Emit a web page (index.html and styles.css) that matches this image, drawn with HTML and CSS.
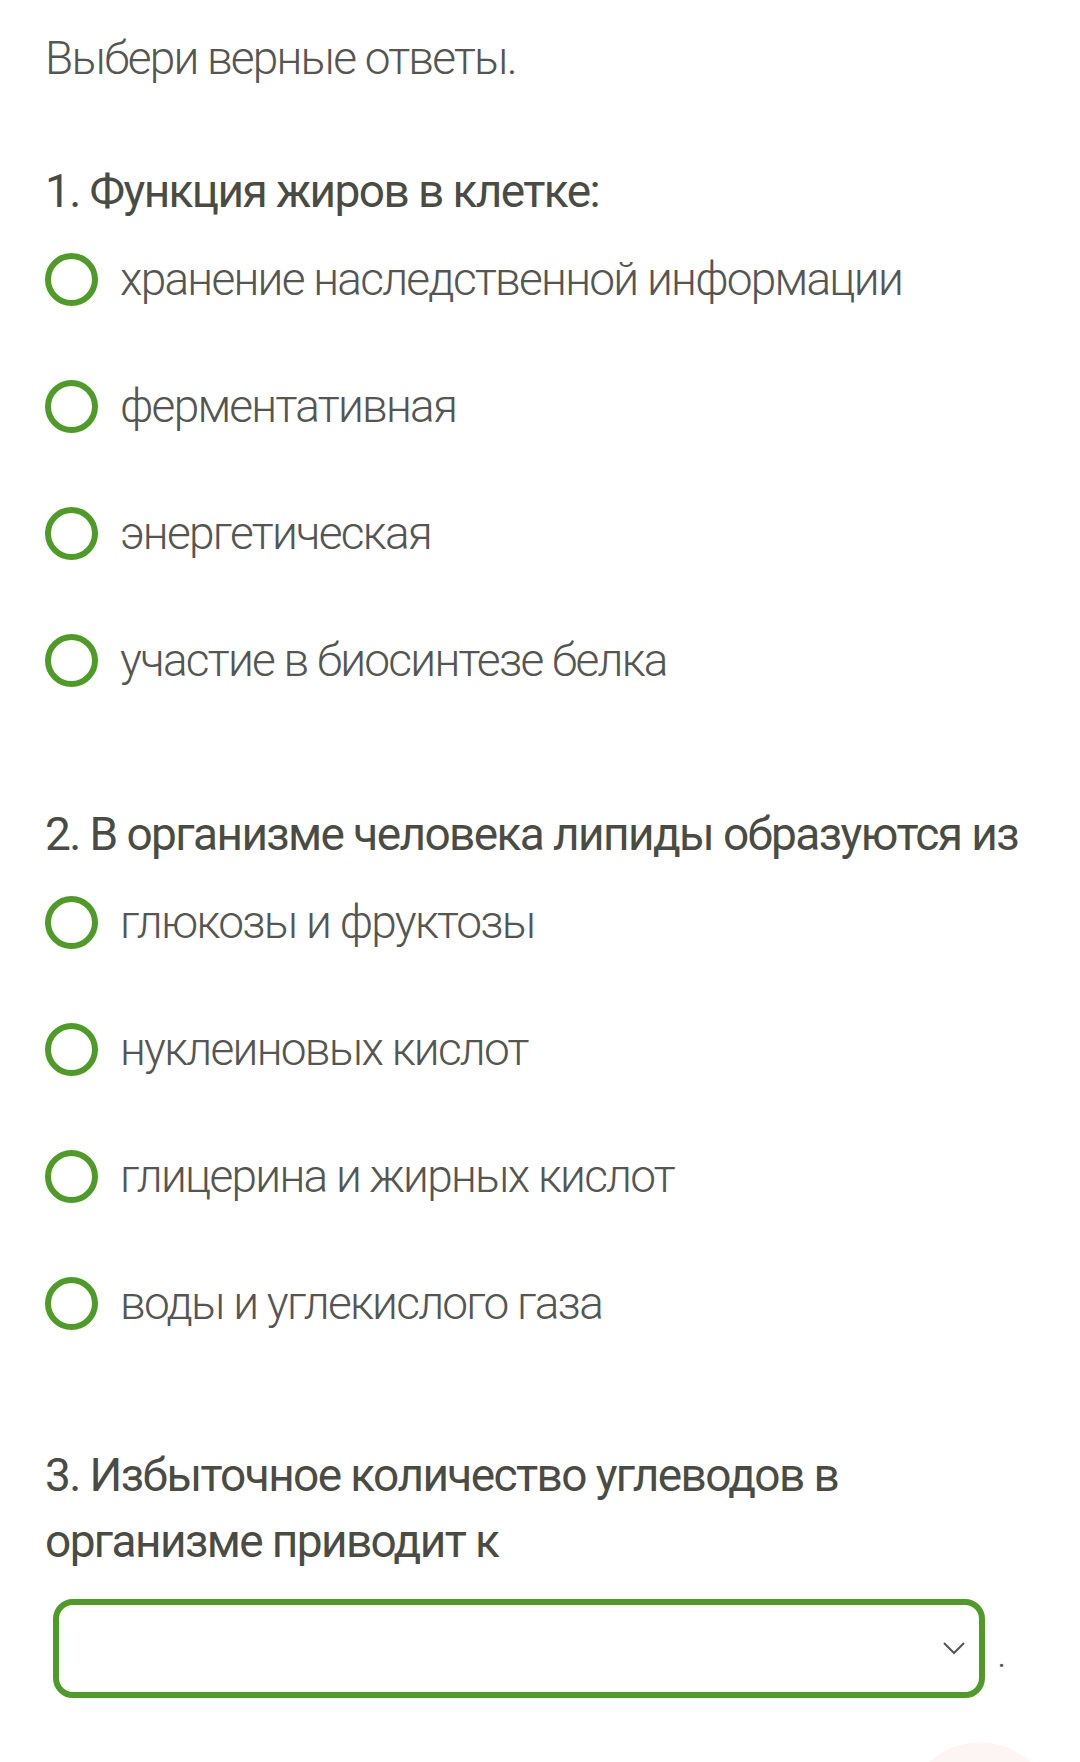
FILE: index.html
```html
<!DOCTYPE HTML>
<html>
<head>
<meta http-equiv="Content-Type" content="text/html; charset=utf-8" />
<title>Выбери верные ответы</title>
<link rel="stylesheet" href="styles.css">
</head>
<body>
	<div class="test">
		<p class="intro">Выбери верные ответы.</p>

		<div class="quest">
			<h2>1. Функция жиров в клетке:</h2>
			<label class="opt"><span class="radio"></span>хранение наследственной информации</label>
			<label class="opt"><span class="radio"></span>ферментативная</label>
			<label class="opt"><span class="radio"></span>энергетическая</label>
			<label class="opt"><span class="radio"></span>участие в биосинтезе белка</label>
		</div>

		<div class="quest">
			<h2>2. В организме человека липиды образуются из</h2>
			<label class="opt"><span class="radio"></span>глюкозы и фруктозы</label>
			<label class="opt"><span class="radio"></span>нуклеиновых кислот</label>
			<label class="opt"><span class="radio"></span>глицерина и жирных кислот</label>
			<label class="opt"><span class="radio"></span>воды и углекислого газа</label>
		</div>

		<div class="quest q3">
			<h2>3. Избыточное количество углеводов в<br>организме приводит к</h2>
			<div class="answer">
				<div class="select">
					<svg class="arrow" width="24" height="14" viewBox="0 0 24 14"><path d="M2 2 L12 12 L22 2" fill="none" stroke="#555" stroke-width="2"/></svg>
				</div>
				<span class="dot">.</span>
			</div>
		</div>
	</div>
	<div class="fab"></div>
</body>
</html>
```

FILE: styles.css
```css
* {
	margin: 0;
	padding: 0;
}

html, body {
	overflow: hidden;
}

body {
	background: #fff;
	font-family: Roboto, "Noto Sans", sans-serif;
	color: #555552;
	height: 1762px;
	position: relative;
}

.test {
	padding: 28px 0 0 45px;
}

.intro {
	font-size: 46px;
	font-weight: 300;
	line-height: 60px;
	letter-spacing: -1.8px;
}

/**** вопросы ****/
.quest h2 {
	font-size: 46px;
	font-weight: 400;
	line-height: 60px;
	letter-spacing: -1.6px;
	color: #4a4b43;
	margin-bottom: 30px;
}

.quest {
	margin-top: 73px;
}

.quest + .quest {
	margin-top: 116px;
}

.opt {
	display: flex;
	align-items: center;
	height: 56px;
	margin-bottom: 71px;
	font-size: 46px;
	font-weight: 300;
	letter-spacing: -1.75px;
}

.opt:last-child {
	margin-bottom: 0;
}

.radio {
	width: 41px;
	height: 41px;
	border: 6px solid #4e9c27;
	border-radius: 50%;
	margin-right: 22px;
	flex: none;
}

.quest.q3 {
	margin-top: 111px;
}

.q3 h2 {
	line-height: 66px;
	margin-bottom: 25px;
}

.answer {
	display: flex;
	align-items: center;
	padding-left: 8px;
}

.select {
	width: 920px;
	height: 87px;
	border: 6px solid #4e9c27;
	border-radius: 20px;
	position: relative;
}

.arrow {
	position: absolute;
	right: 13px;
	top: 36px;
}

.dot {
	font-size: 40px;
	font-weight: 300;
	margin-left: 12px;
	padding-top: 10px;
}

.fab {
	position: absolute;
	left: 905px;
	top: 1742px;
	width: 150px;
	height: 20px;
	background: radial-gradient(circle 75px at 75px 75px, #fdf4f4 99%, transparent 100%);
}
```
